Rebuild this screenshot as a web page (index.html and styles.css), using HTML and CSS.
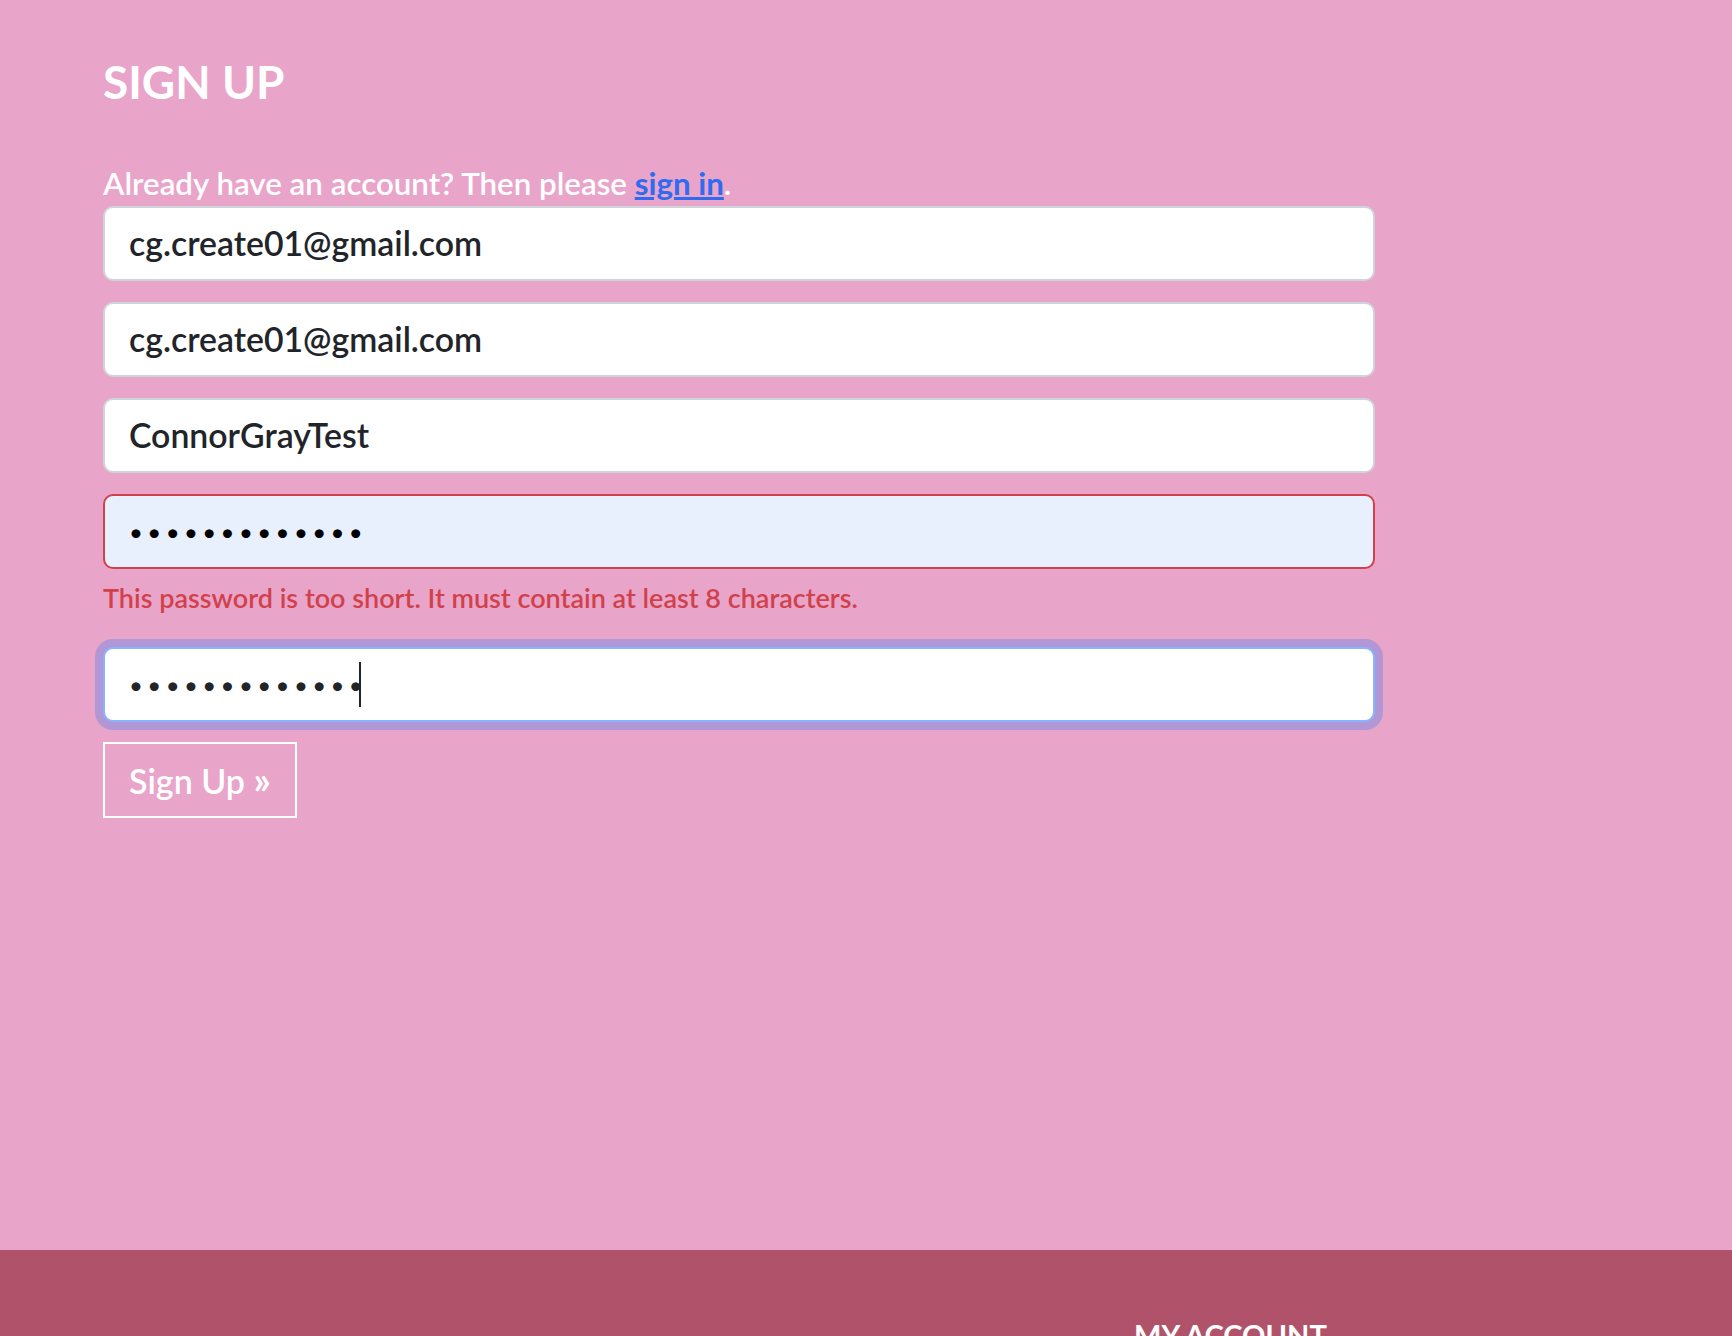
FILE: index.html
```html
<!DOCTYPE html>
<html lang="en">
<head>
<meta charset="utf-8">
<title>Sign Up</title>
<link rel="stylesheet" href="styles.css">
</head>
<body>
<div class="page">
  <main class="content">
    <h1 class="title">SIGN UP</h1>
    <p class="lead">Already have an account? Then please <a class="link" href="#">sign in</a>.</p>
    <form class="form" onsubmit="return false">
      <input class="field" type="email" value="cg.create01@gmail.com">
      <input class="field" type="email" value="cg.create01@gmail.com">
      <input class="field" type="text" value="ConnorGrayTest">
      <input class="field field-invalid" type="password" value="abcdefghijklm">
      <p class="error">This password is too short. It must contain at least 8 characters.</p>
      <div class="field-wrap">
        <input class="field field-focus" type="password" value="abcdefghijklm">
        <span class="caret"></span>
      </div>
      <button class="btn" type="submit">Sign Up <span class="btn-arrows">&raquo;</span></button>
    </form>
  </main>
  <footer class="footer">
    <div class="footer-inner">
      <div class="footer-col"></div>
      <div class="footer-col">
        <h4 class="footer-heading">MY ACCOUNT</h4>
      </div>
    </div>
  </footer>
</div>
</body>
</html>
```

FILE: styles.css
```css
html, body {
  margin: 0;
  padding: 0;
}

body {
  background: #e9a4c9;
  font-family: "Lato", "Noto Sans", sans-serif;
  color: #212529;
}

.page {
  height: 1336px;
  overflow: hidden;
  display: flex;
  flex-direction: column;
}

.content {
  height: 1250px;
  flex: none;
  box-sizing: border-box;
  padding: 54px 0 0 103px;
}

.title {
  margin: 0;
  font-size: 46px;
  line-height: 1.2;
  font-weight: 700;
  color: #ffffff;
}

.lead {
  margin: 56px 0 0;
  font-size: 31.3px;
  line-height: 1.2;
  font-weight: 600;
  color: #ffffff;
}

.link {
  color: #2f6bf0;
  font-weight: 700;
  text-decoration: underline;
}

.form {
  margin-top: 3px;
  width: 1272px;
  display: flex;
  flex-direction: column;
  align-items: flex-start;
}

.field {
  display: block;
  box-sizing: border-box;
  width: 100%;
  height: 75px;
  margin: 0 0 21px;
  padding: 0 24px;
  font-family: inherit;
  font-size: 33.8px;
  font-weight: 600;
  color: #212529;
  background: #ffffff;
  border: 2px solid #ced4da;
  border-radius: 10px;
  outline: none;
}

.field[type="password"] {
  letter-spacing: 4.4px;
  font-size: 24px;
  font-weight: 400;
}

.field-invalid {
  background: #e8f0fe;
  border-color: #d0414b;
  color: #000000;
  margin-bottom: 0;
}

.error {
  margin: 13px 0 33px;
  font-size: 27px;
  line-height: 1.2;
  font-weight: 600;
  color: #d0414b;
}

.field-wrap {
  position: relative;
  width: 100%;
  margin-bottom: 20px;
}

.field-wrap .field {
  margin: 0;
}

.field-focus {
  border-color: #86b7fe;
  box-shadow: 0 0 0 8px rgba(13, 110, 253, 0.25);
}

.caret {
  position: absolute;
  left: 256px;
  top: 15px;
  width: 2px;
  height: 45px;
  background: #212529;
}

.btn {
  box-sizing: border-box;
  height: 76px;
  width: 194px;
  padding: 0 24px;
  background: transparent;
  border: 2px solid #ffffff;
  border-radius: 0;
  color: #ffffff;
  font-family: inherit;
  font-size: 34px;
  font-weight: 600;
  text-align: left;
  cursor: pointer;
}

.btn-arrows {
  font-weight: 700;
  font-size: 1.12em;
  line-height: 1;
}

.footer {
  flex: 1;
  background: #b0536a;
}

.footer-inner {
  display: grid;
  grid-template-columns: 1134px 1fr;
  padding-top: 68px;
}

.footer-heading {
  margin: 0;
  font-size: 29px;
  line-height: 1.2;
  font-weight: 700;
  color: #ffffff;
}
```
